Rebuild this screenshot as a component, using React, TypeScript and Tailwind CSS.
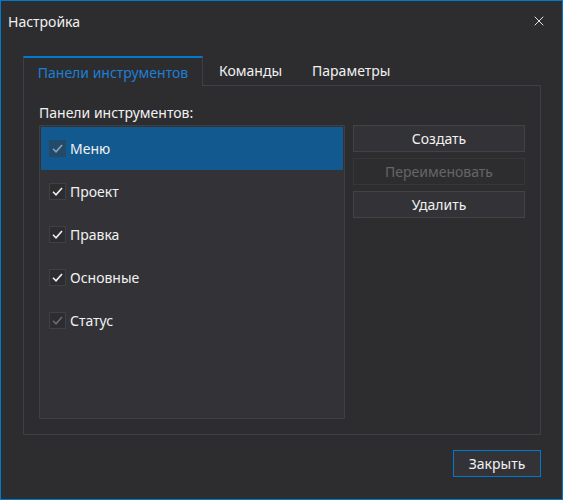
import { X } from 'lucide-react'

const items = [
  { label: 'Меню', checked: true, selected: true },
  { label: 'Проект', checked: true },
  { label: 'Правка', checked: true },
  { label: 'Основные', checked: true },
  { label: 'Статус', checked: true, dim: true },
]

function Check({ selected, dim }: { selected?: boolean; dim?: boolean }) {
  const box = selected
    ? 'bg-[#244a6a] border-[#244a6a]'
    : 'bg-[#2d2d30] border-[#3f3f46]'
  const stroke = selected ? '#8aa3b8' : dim ? '#6b6b70' : '#f1f1f1'
  return (
    <span className={`flex h-[17px] w-[17px] items-center justify-center border ${box}`}>
      <svg width="13" height="13" viewBox="0 0 13 13" fill="none">
        <path d="M2 6.8 L5 9.8 L11 3" stroke={stroke} strokeWidth="1.6" />
      </svg>
    </span>
  )
}

function Button({ children, disabled }: { children: string; disabled?: boolean }) {
  return (
    <button
      className={`h-[27px] w-[172px] border text-[14px] leading-none ${
        disabled
          ? 'border-[#37373a] bg-[#2d2d30] text-[#656565]'
          : 'border-[#434346] bg-[#333337] text-[#f1f1f1]'
      }`}
    >
      {children}
    </button>
  )
}

export default function App() {
  return (
    <div
      className="flex h-[500px] w-[563px] flex-col border border-[#007acc] bg-[#2d2d30] text-[#f1f1f1]"
      style={{ fontFamily: '"Noto Sans", "Open Sans", sans-serif' }}
    >
      <div className="flex h-[55px] items-start justify-between pl-[7px] pr-[15px] pt-[11px]">
        <span className="text-[14px] leading-[20px]">Настройка</span>
        <X size={16} strokeWidth={1.4} className="mt-[1px]" />
      </div>

      <div className="ml-[22px] flex h-[29px] items-stretch">
        <div className="relative z-10 -mb-px flex w-[180px] items-center justify-center border-x border-t-2 border-x-[#3f3f46] border-t-[#007acc] bg-[#2d2d30] text-[14px] text-[#1c7fd6]">
          Панели инструментов
        </div>
        <div className="flex items-center px-[16px] text-[14px]">Команды</div>
        <div className="flex items-center px-[14px] text-[14px]">Параметры</div>
      </div>

      <div className="ml-[22px] flex h-[350px] w-[518px] flex-col border border-[#3f3f46] px-[15px]">
        <div className="mt-[16px] h-[22px] text-[14px] leading-[22px]">Панели инструментов:</div>
        <div className="mt-[1px] flex gap-[8px]">
          <div className="h-[294px] w-[306px] border border-[#3f3f46] bg-[#333337] p-px">
            {items.map((it) => (
              <div
                key={it.label}
                className={`flex h-[43px] items-center gap-[4px] pl-[8px] text-[14px] ${
                  it.selected ? 'bg-[#11598f]' : ''
                }`}
              >
                <Check selected={it.selected} dim={it.dim} />
                <span>{it.label}</span>
              </div>
            ))}
          </div>
          <div className="flex flex-col gap-[6px]">
            <Button>Создать</Button>
            <Button disabled>Переименовать</Button>
            <Button>Удалить</Button>
          </div>
        </div>
      </div>

      <div className="flex justify-end pr-[21px] pt-[15px]">
        <button className="h-[27px] w-[88px] border border-[#007acc] bg-[#333337] text-[14px] leading-none text-[#f1f1f1]">
          Закрыть
        </button>
      </div>
    </div>
  )
}
